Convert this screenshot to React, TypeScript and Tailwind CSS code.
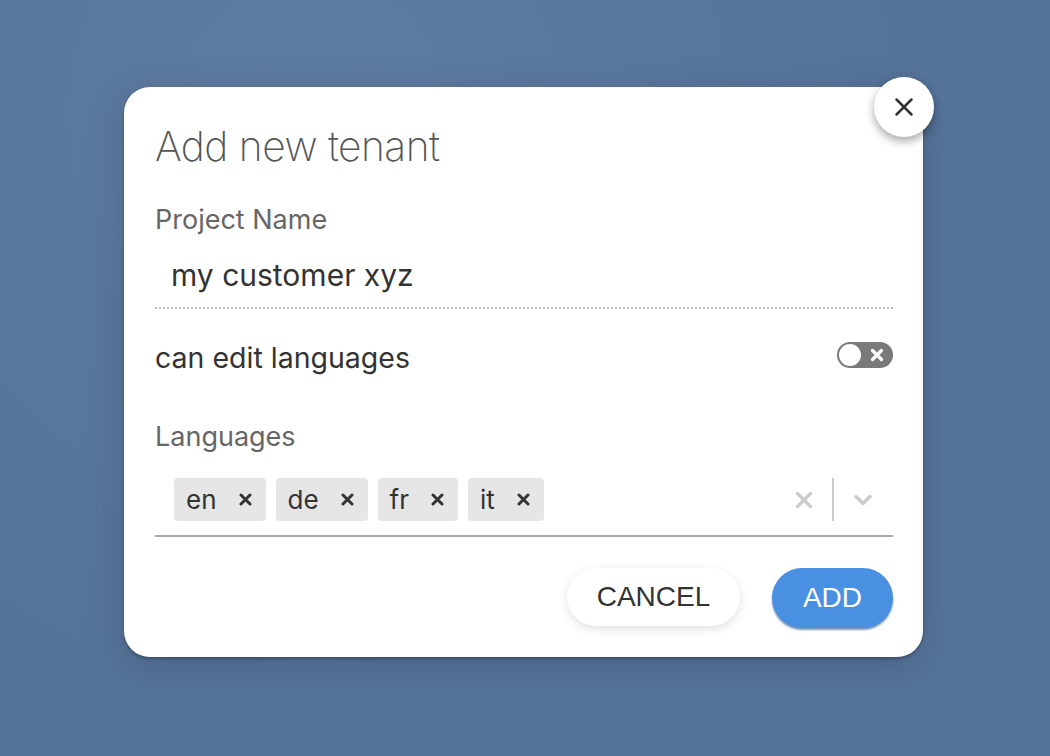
import { X, ChevronDown } from "lucide-react";

const langs = ["en", "de", "fr", "it"];

const App = () => {
  return (
    <div
      className="w-[1050px] h-[756px] overflow-hidden bg-[#58769b] bg-[radial-gradient(circle_at_30%_15%,#5e7ba0,#56739a_60%)] pt-[87px] pl-[124px]"
      style={{ fontFamily: "Inter, 'Liberation Sans', sans-serif" }}
    >
      <div className="relative w-[799px] h-[570px] bg-white rounded-[26px] shadow-[0_2px_3px_rgba(0,0,0,0.25),0_10px_40px_rgba(0,0,0,0.15)] pl-[31px] pr-[30px] pt-[32px]">
        <button className="absolute -top-[10px] -right-[11px] w-[60px] h-[60px] rounded-full bg-white flex items-center justify-center shadow-[0_4px_10px_rgba(0,0,0,0.35)]">
          <X size={30} strokeWidth={2} className="text-[#333]" />
        </button>

        <h2 className="text-[40.7px] leading-[56px] font-extralight text-[#555] tracking-[-0.5px]">Add new tenant</h2>

        <div className="mt-[29px] text-[27px] leading-[32px] text-[#666]">Project Name</div>
        <div className="mt-[21px] pl-[16px] pb-[14px] border-b-2 border-dotted border-[#bbb] text-[30px] leading-[36px] text-[#333]">
          my customer xyz
        </div>

        <div className="mt-[31px] flex items-center justify-between">
          <span className="text-[28.5px] leading-[36px] text-[#333]">can edit languages</span>
          <div className="mb-[6px] w-[56px] h-[26px] rounded-full bg-[#7a7a7a] flex items-center px-[2px]">
            <div className="w-[22px] h-[22px] rounded-full bg-white" />
            <svg width="14" height="14" viewBox="0 0 14 14" className="ml-[9px]">
              <path d="M2.5 2.5 L11.5 11.5 M11.5 2.5 L2.5 11.5" stroke="white" strokeWidth="3.2" strokeLinecap="round" />
            </svg>
          </div>
        </div>

        <div className="mt-[45px] text-[27px] leading-[32px] text-[#666]">Languages</div>
        <div className="mt-[25px] flex items-center border-b-2 border-[#aaa] pb-[14px] pl-[19px]">
          <div className="flex flex-1 gap-[10px]">
            {langs.map((l) => (
              <div key={l} className="h-[43px] flex items-center gap-[22px] bg-[#e6e6e6] rounded-[4px] pl-[12px] pr-[14px]">
                <span className="text-[26px] text-[#333] leading-none">{l}</span>
                <svg width="13" height="13" viewBox="0 0 13 13">
                  <path d="M2 2 L11 11 M11 2 L2 11" stroke="#333" strokeWidth="3" strokeLinecap="round" />
                </svg>
              </div>
            ))}
          </div>
          <div className="flex items-center h-[43px]">
            <svg width="18" height="18" viewBox="0 0 18 18" className="mr-[19px]">
              <path d="M2.5 2.5 L15.5 15.5 M15.5 2.5 L2.5 15.5" stroke="#ccc" strokeWidth="3.5" strokeLinecap="round" />
            </svg>
            <div className="w-[2px] h-[43px] bg-[#ccc]" />
            <ChevronDown size={28} strokeWidth={3} className="text-[#ccc] ml-[15px] mr-[16px]" />
          </div>
        </div>

        <div className="mt-[31px] flex justify-end gap-[32px]">
          <button
            className="w-[173px] h-[58px] rounded-full bg-white shadow-[0_3px_10px_rgba(0,0,0,0.12)] text-[28px] text-[#333]"
            style={{ fontFamily: "'Liberation Sans', Arial, sans-serif" }}
          >
            CANCEL
          </button>
          <button
            className="w-[121px] h-[60px] rounded-full bg-[#4a90e2] shadow-[0_2px_2px_rgba(30,80,140,0.6)] text-[28px] text-white"
            style={{ fontFamily: "'Liberation Sans', Arial, sans-serif" }}
          >
            ADD
          </button>
        </div>
      </div>
    </div>
  );
};

export default App;
